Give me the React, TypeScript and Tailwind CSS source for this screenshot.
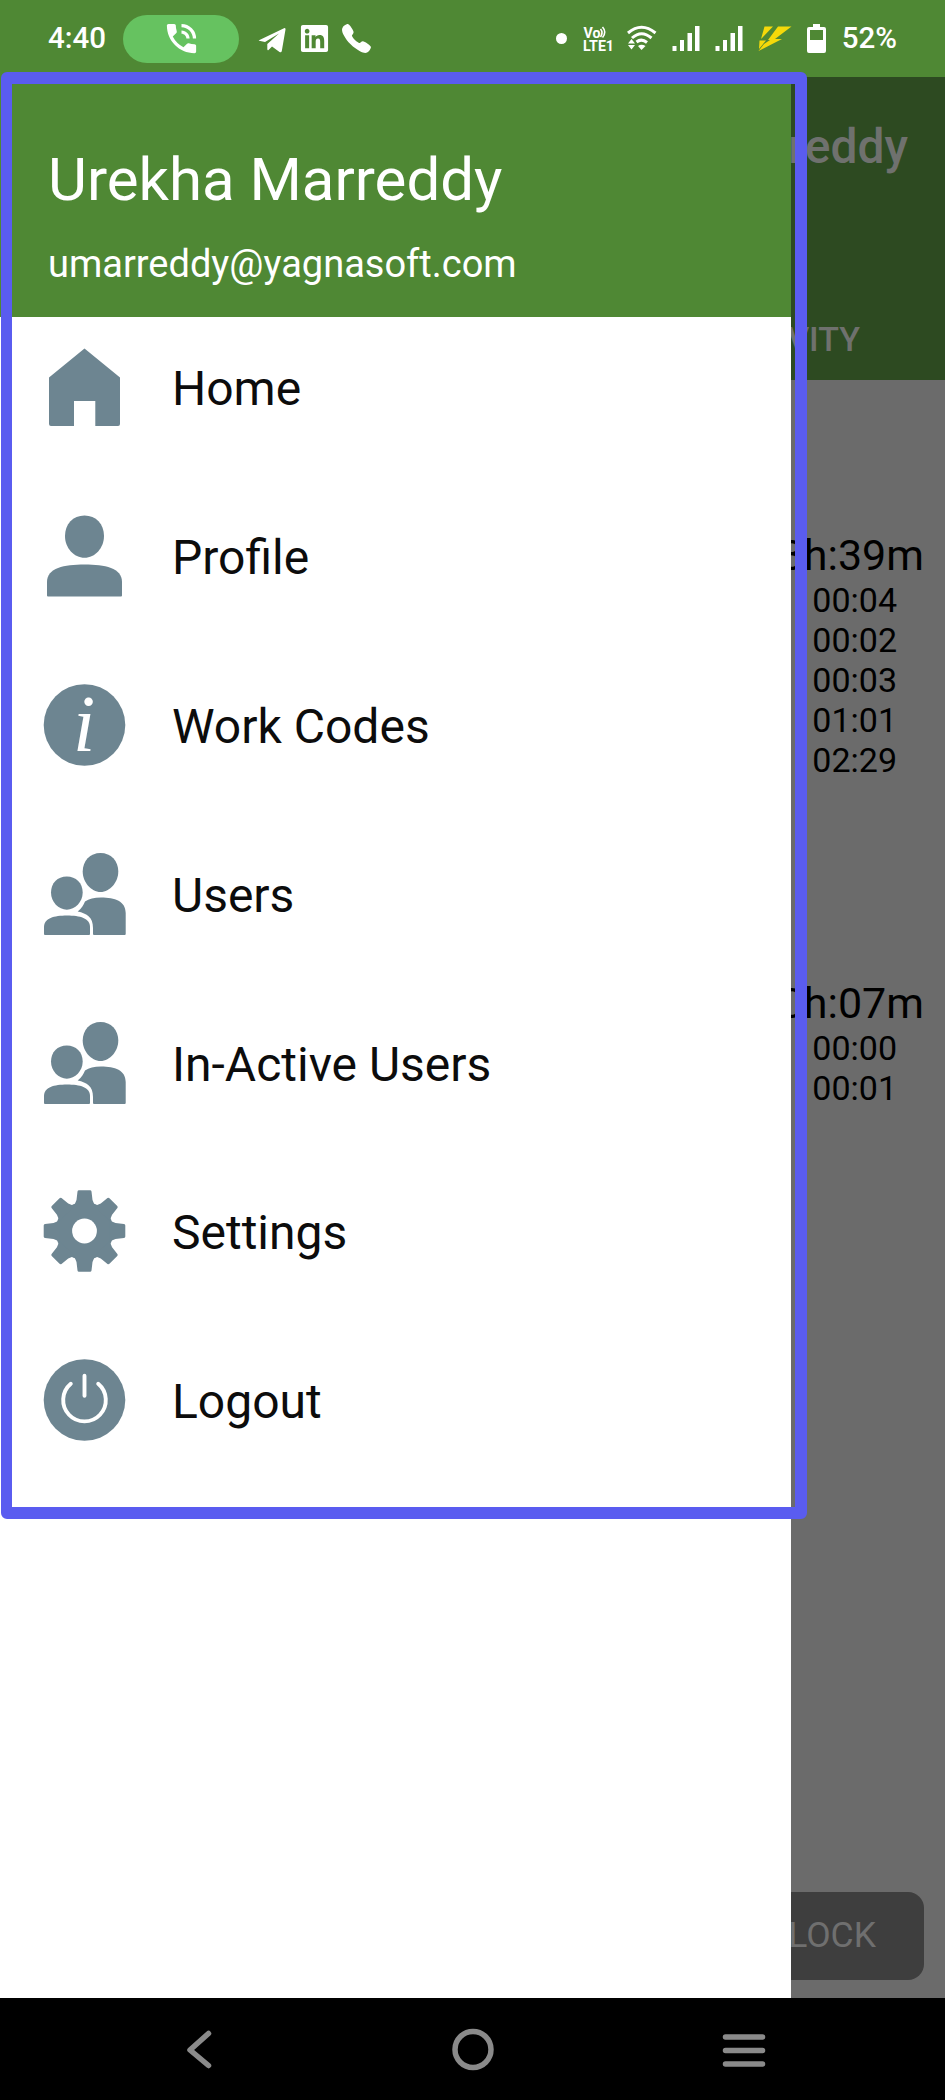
import type { ReactNode } from "react"
import { FaLinkedin } from "react-icons/fa"
import { IoCall } from "react-icons/io5"
import { MdPhoneInTalk } from "react-icons/md"

function HomeIcon() {
  return <path d="M40.5 2.5 76 31.5V78q0 2-2 2H51.300V55H30V80H7q-2 0-2-2V31.500Z" />
}

function ProfileIcon() {
  return (
    <>
      <path d="M40.500.5C52 .5 60 9 60 21S51 42.800 40.500 42.800 21 33 21 21 29 .5 40.500.5Z" />
      <path d="M4 81.500q-1 0-1-1V67C3 53 20 49.500 40.500 49.500S78 53 78 67V80.500q0 1-1 1Z" />
    </>
  )
}

function InfoIcon() {
  return (
    <>
      <circle cx="40.500" cy="41" r="40.800" />
      <text x="29" y="67" fontSize="80" fill="#fff" className="font-['Liberation_Serif',serif] italic">
        i
      </text>
    </>
  )
}

function UsersIcon() {
  return (
    <>
      <path d="M56.500 0C67 0 74.300 8 74.300 18.500S66 39 56.500 39 38.700 29 38.700 18.500 46 0 56.500 0Z" />
      <path d="M22.800 23.400C32 23.400 38.700 30 38.700 39.500S31 56.700 22.800 56.700 7 49 7 39.500 13.500 23.400 22.800 23.400Z" />
      <path d="M1 82q-1 0-1-1V74C0 65 10 62.400 23 62.400S46 65 46 74V81q0 1-1 1Z" />
      <path d="M50 82q-1 0-1-1V75C49 64 43 60.500 33.700 58.500 38 55 39.500 52 41 48.500 45 45.500 50 44.400 57 44.400 71 44.400 81.700 48 81.700 60V81q0 1-1 1Z" />
    </>
  )
}

const teeth = [0, 45, 90, 135, 180, 225, 270, 315]

function SettingsIcon() {
  return (
    <>
      <circle cx="40.500" cy="41" r="29" />
      {teeth.map((angle) => (
        <path
          key={angle}
          d="M30 16 32.500 10 33.500 1.500q.2-1.300 1.500-1.300H46q1.300 0 1.500 1.300L48.500 10 51 16Z"
          transform={`rotate(${angle} 40.500 41)`}
        />
      ))}
      <circle cx="40.500" cy="41" r="12.400" fill="#fff" />
    </>
  )
}

function LogoutIcon() {
  return (
    <>
      <circle cx="40.500" cy="41" r="40.800" />
      <g fill="none" stroke="#fff" strokeWidth="3.900" strokeLinecap="round">
        <path d="M26.800 24.800A21.300 21.300 0 1 0 54.200 24.800" />
        <path d="M40.500 16.800V36.800" />
      </g>
    </>
  )
}

const menuItems: { label: string; icon: ReactNode }[] = [
  { label: "Home", icon: <HomeIcon /> },
  { label: "Profile", icon: <ProfileIcon /> },
  { label: "Work Codes", icon: <InfoIcon /> },
  { label: "Users", icon: <UsersIcon /> },
  { label: "In-Active Users", icon: <UsersIcon /> },
  { label: "Settings", icon: <SettingsIcon /> },
  { label: "Logout", icon: <LogoutIcon /> },
]

const days = [
  { total: "3h:39m", entries: ["00:04", "00:02", "00:03", "01:01", "02:29"] },
  { total: "0h:07m", entries: ["00:00", "00:01"] },
]

function SignalIcon() {
  return (
    <svg width="28" height="26" viewBox="0 0 28 26" fill="#fff">
      <rect x="0.500" y="20" width="4" height="5" />
      <rect x="8" y="14" width="4" height="11" />
      <rect x="15.500" y="7" width="4.500" height="18" />
      <rect x="23" y="0" width="4.500" height="25" />
    </svg>
  )
}

function VolteIcon() {
  return (
    <svg width="32" height="28" viewBox="0 0 32 28" fill="#fff" className="font-['Roboto',sans-serif] font-bold">
      <text x="0.500" y="12.500" fontSize="14" textLength="17" lengthAdjust="spacingAndGlyphs">
        Vo
      </text>
      <path d="M17.500 4q3 3.500 0 8M19.500 2q4.500 5 0 10.500" fill="none" stroke="#fff" strokeWidth="1.600" />
      <text x="0" y="26" fontSize="14" textLength="31" lengthAdjust="spacingAndGlyphs">
        LTE1
      </text>
    </svg>
  )
}

function WifiIcon() {
  return (
    <svg width="30" height="27" viewBox="0 0 30 27">
      <g fill="none" stroke="#fff" strokeWidth="3">
        <path d="M1 8Q14.500-3.500 28.500 8" />
        <path d="M5 13Q14.500 4.500 24.500 13" />
        <path d="M9.500 17Q14.500 13 20 17.500" />
      </g>
      <path d="M4.500 14 8 18.500H1ZM4.500 24.500 8 20H1ZM14.500 25 11 21Q14.500 18.500 18.500 21Z" fill="#fff" />
    </svg>
  )
}

function StatusBar() {
  return (
    <div className="flex h-[77px] items-center bg-[#4f8834] pl-12 text-[29.500px] font-medium text-white">
      <span className="w-[75px]">4:40</span>
      <div className="flex h-12 w-[116px] items-center justify-center rounded-full bg-[#66c260]">
        <MdPhoneInTalk className="size-[39px]" />
      </div>
      <svg width="28" height="26" viewBox="0 0 28 26" fill="#fff" className="ml-[19px] mt-1">
        <path d="M1.500 12 26 .2q1.600-.4 1.500 1.300L23.800 23q-.5 2-2.300 1L14 18.500 10.500 22Q9.500 23 9.300 21V16L21 5.500 7 14 1.200 12.800Q.3 12.400 1.500 12Z" />
      </svg>
      <FaLinkedin className="ml-[13px] size-[31px]" />
      <IoCall className="ml-[10px] size-[33px]" />
      <div className="ml-auto flex items-center pr-12">
        <span className="size-[11px] rounded-full bg-white" />
        <div className="ml-[16px] flex items-center">
          <VolteIcon />
        </div>
        <div className="ml-[12px]">
          <WifiIcon />
        </div>
        <div className="ml-[15px] flex gap-[15px]">
          <SignalIcon />
          <SignalIcon />
        </div>
        <svg width="34" height="26" viewBox="0 0 34 26" fill="#f5d90a" className="ml-[15px]">
          <path d="M6.500.5H15L3 13ZM20 .5H33.500L17 13H24L.5 25 6 18 12 14H10ZM1.500 14.500H8L1 23Z" />
        </svg>
        <svg width="20" height="30" viewBox="0 0 20 30" className="ml-[15px]">
          <path d="M6 0H13V3H17q2 0 2 2V27q0 2-2 2H2q-2 0-2-2V5q0-2 2-2H6ZM3 6V16H16V6Z" fill="#fff" fillRule="evenodd" />
        </svg>
        <span className="ml-[15px]">52%</span>
      </div>
    </div>
  )
}

function TimesheetScreen() {
  return (
    <div className="flex flex-1 flex-col bg-[#6b6b6b] text-right text-black">
      <header className="flex h-[303px] flex-col bg-[#2d4a21] font-medium text-[#6f716e]">
        <p className="mt-[42px] pr-[37px] text-[48px] leading-[56px]">Marreddy</p>
        <p className="mt-auto mb-[21px] pr-[85px] text-[34px] leading-10">ACTIVITY</p>
      </header>
      {days.map((day) => (
        <section key={day.total} className="mb-[48px]">
          <p className="mt-[150px] pr-[21px] text-[43px] leading-[50px] first:mt-[150px]">{day.total}</p>
          {day.entries.map((entry) => (
            <p key={entry} className="pr-12 text-[34px] leading-10">
              {entry}
            </p>
          ))}
        </section>
      ))}
      <div className="mt-auto mb-[18px] ml-auto mr-[21px] flex h-[88px] w-[300px] items-center justify-end rounded-2xl bg-[#3e3e3e] pr-12 text-[35.500px] text-[#6f6f6f]">
        CLOCK
      </div>
    </div>
  )
}

function Drawer() {
  return (
    <aside className="absolute top-[77px] left-0 flex h-[1921px] w-[791px] flex-col bg-white">
      <div className="h-60 bg-[#4f8834] pl-12 text-white">
        <h1 className="pt-[68px] text-[60px] leading-[70px]">Urekha Marreddy</h1>
        <p className="pt-[27px] text-[38px] leading-[44px]">umarreddy@yagnasoft.com</p>
      </div>
      <nav className="flex flex-col gap-[24.900px]">
        {menuItems.map((item) => (
          <a key={item.label} className="flex h-36 items-center pl-11 text-[48px] text-[#0c0c0c]">
            <svg viewBox="0 0 82 82" fill="#6d8591" className="-mt-1 mr-[46px] size-[82px] overflow-visible">
              {item.icon}
            </svg>
            {item.label}
          </a>
        ))}
      </nav>
    </aside>
  )
}

function SystemNav() {
  return (
    <div className="flex h-[102px] items-center bg-black">
      <svg width="945" height="102" fill="none" stroke="#8a8a8a" strokeWidth="5.500" strokeLinecap="round" strokeLinejoin="round">
        <path d="M208.500 35.500 190 52 208.500 67.500" />
        <circle cx="473" cy="51.500" r="18" />
        <path d="M725.500 39H762.500M725.500 52.500H762.500M725.500 66H762.500" />
      </svg>
    </div>
  )
}

export default function App() {
  return (
    <div className="relative flex h-[2100px] w-[945px] flex-col overflow-hidden font-['Roboto',sans-serif]">
      <StatusBar />
      <TimesheetScreen />
      <SystemNav />
      <Drawer />
      <div className="absolute top-[72px] left-px h-[1447px] w-[806px] rounded-md border-[12px] border-l-[11px] border-[#5a5cf0]" />
    </div>
  )
}
